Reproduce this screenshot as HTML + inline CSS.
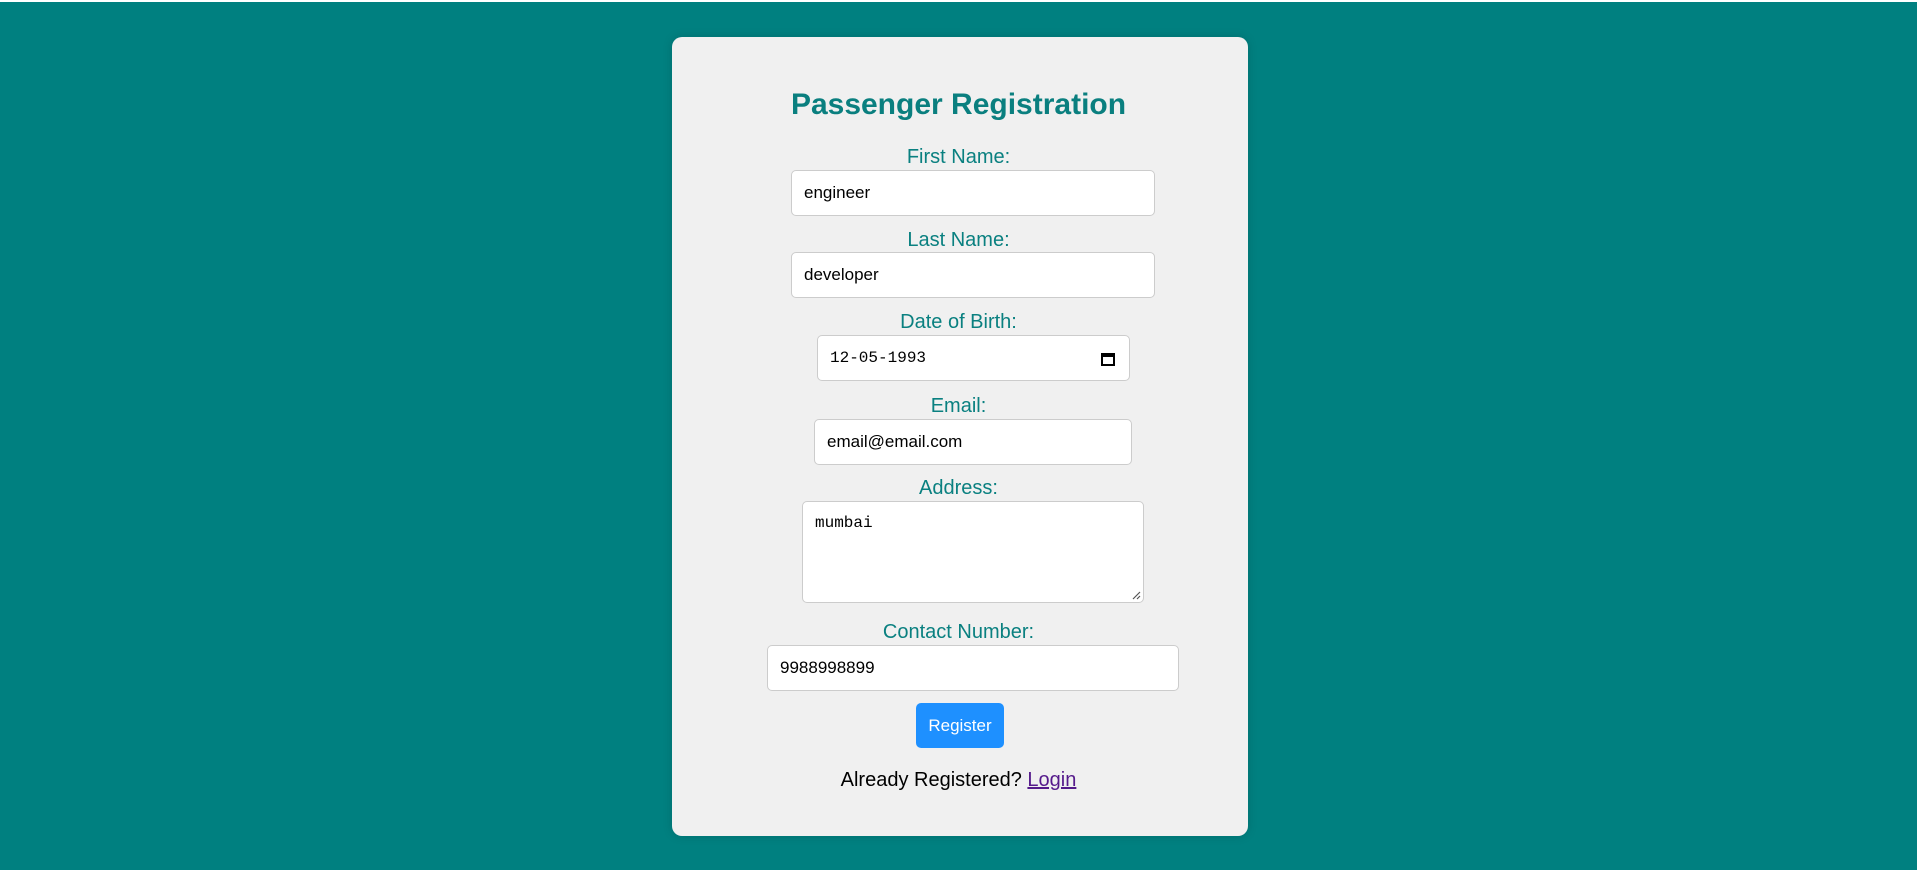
<!DOCTYPE html>
<html><head><meta charset="utf-8"><style>
*{box-sizing:border-box;margin:0;padding:0}
html,body{width:1917px;height:872px;background:#fff;overflow:hidden;font-family:"Liberation Sans",Arial,sans-serif}
.bg{position:absolute;left:0;top:2px;width:1917px;height:868px;background:#008080}
.card{position:absolute;left:672px;top:37px;width:576px;height:799px;background:#f0f0f0;border-radius:10px;box-shadow:0 0 10px rgba(0,0,0,.15)}
.t{position:absolute;left:0;width:1917px;text-align:center;white-space:nowrap}
h1{position:absolute;left:0;width:1917px;text-align:center;font-size:30px;line-height:35px;top:87px;color:#0a7f7f;font-weight:bold}
.lb{font-size:20px;line-height:23px;color:#0a8080}
.in{position:absolute;background:#fff;border:1px solid #ccc;border-radius:5px;font-size:17px;color:#000;padding-left:12px;display:flex;align-items:center}
.mono{font-family:"Liberation Mono","DejaVu Sans Mono",monospace;font-size:16px}
.btn{position:absolute;left:916px;top:703px;width:88px;height:45px;background:#1e90ff;border-radius:5px;color:#fff;font-size:17px;display:flex;align-items:center;justify-content:center}
</style></head><body>
<div class="bg"></div>
<div class="card"></div>
<h1>Passenger Registration</h1>
<div class="t lb" style="top:146px">First Name:</div>
<div class="in" style="left:791px;top:170px;width:364px;height:46px">engineer</div>
<div class="t lb" style="top:229px">Last Name:</div>
<div class="in" style="left:791px;top:252px;width:364px;height:46px">developer</div>
<div class="t lb" style="top:311px">Date of Birth:</div>
<div class="in mono" style="left:817px;top:335px;width:313px;height:46px">12-05-1993
<svg style="position:absolute;right:14px;top:16px" width="14" height="14" viewBox="0 0 14 14"><rect x="1" y="2" width="12" height="11" fill="none" stroke="#000" stroke-width="2"/><rect x="1" y="2" width="12" height="3" fill="#000"/></svg></div>
<div class="t lb" style="top:395px">Email:</div>
<div class="in" style="left:814px;top:419px;width:318px;height:46px">email@email.com</div>
<div class="t lb" style="top:477px">Address:</div>
<div class="in mono" style="left:802px;top:501px;width:342px;height:102px;align-items:flex-start;padding-top:12px">mumbai
<svg style="position:absolute;right:2px;bottom:2px" width="9" height="9" viewBox="0 0 9 9"><path d="M8 1L1 8M8 5L5 8" stroke="#555" stroke-width="1.2"/></svg></div>
<div class="t lb" style="top:621px">Contact Number:</div>
<div class="in" style="left:767px;top:645px;width:412px;height:46px">9988998899</div>
<div class="btn">Register</div>
<div class="t" style="top:769px;font-size:20px;line-height:23px;color:#000">Already Registered? <span style="color:#551a8b;text-decoration:underline">Login</span></div>
</body></html>
